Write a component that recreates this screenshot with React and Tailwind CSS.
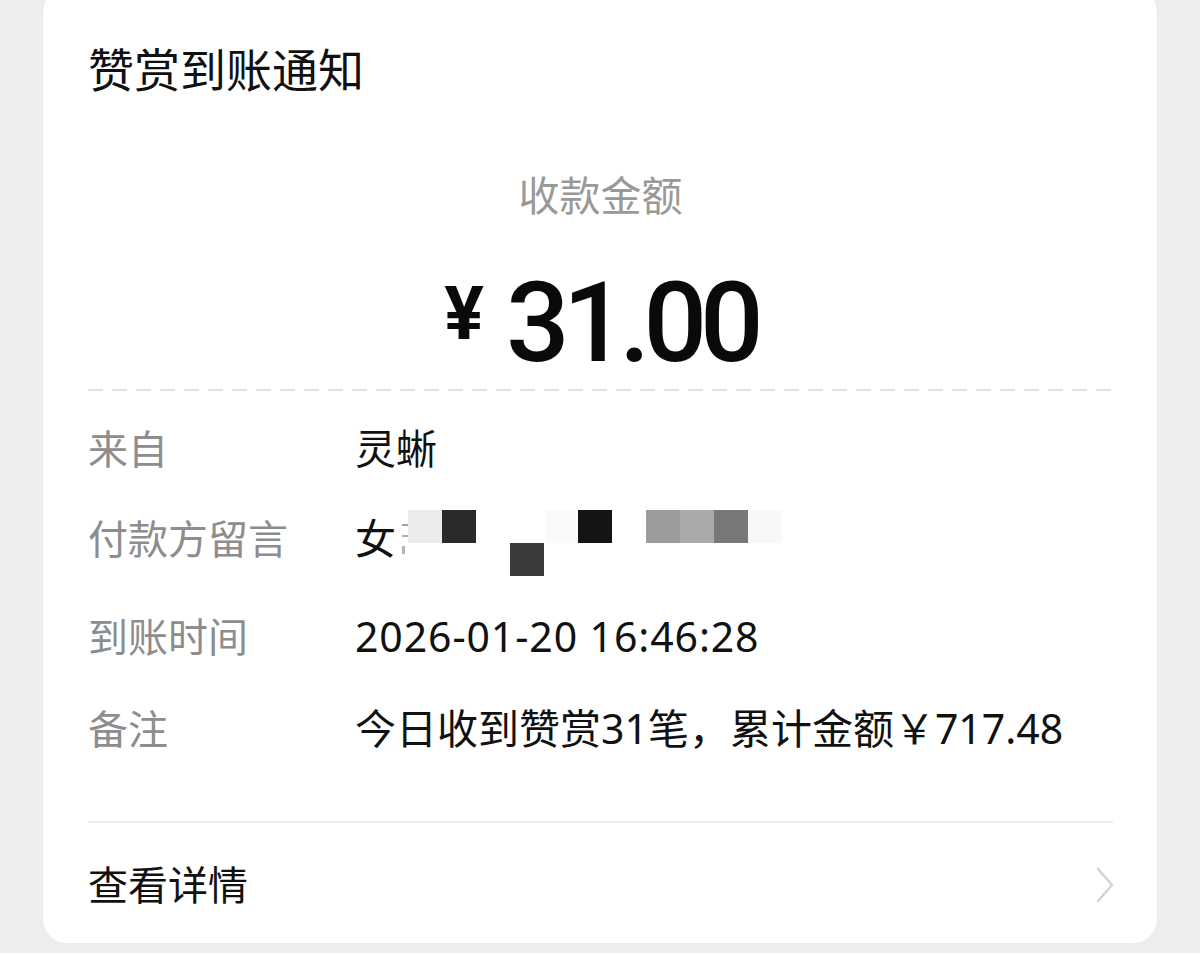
import React from 'react';

const rows = [
  { label: '来自', value: '灵蜥', mt: 'mt-[27px]' },
  { label: '付款方留言', value: 'masked', mt: 'mt-[38px]' },
  { label: '到账时间', value: '2026-01-20 16:46:28', mt: 'mt-[46px]', extra: 'tracking-[0.9px]' },
  { label: '备注', value: '今日收到赞赏31笔，累计金额￥717.48', mt: 'mt-[40px]' },
];

const mosaic = [
  { left: 53, top: -4, color: '#ececec' },
  { left: 87, top: -4, color: '#2a2a2a' },
  { left: 190, top: -4, color: '#fafafa' },
  { left: 223, top: -4, color: '#141414' },
  { left: 291, top: -4, color: '#9c9c9c' },
  { left: 325, top: -4, color: '#aaaaaa' },
  { left: 359, top: -4, color: '#787878' },
  { left: 393, top: -4, color: '#f8f8f8' },
  { left: 155, top: 29, color: '#3b3b3b' },
];

const MaskedMessage = () => (
  <div className="relative flex items-center h-full">
    <span>女</span>
    {/* blurred remnant of the next character */}
    <span className="ml-[6px] flex flex-col gap-[9px] blur-[0.6px]">
      <span className="w-[10px] h-[2px] bg-[#a0a0a0]" />
      <span className="w-[8px] h-[2px] bg-[#b0b0b0]" />
      <span className="w-[3px] h-[8px] bg-[#b5b5b5]" />
    </span>
    {mosaic.map((b, i) => (
      <span
        key={i}
        className="absolute w-[34px] h-[33px] blur-[0.6px]"
        style={{ left: b.left, top: b.top + 6, backgroundColor: b.color }}
      />
    ))}
  </div>
);

export default function App() {
  return (
    <div
      className="min-h-screen bg-[#ededed] px-[43px] pb-[11px] overflow-hidden"
      style={{ fontFamily: '"Noto Sans", "Noto Sans CJK SC", sans-serif' }}
    >
      <div className="-mt-[12px] bg-white rounded-[24px] pl-[45px] pr-[44px] pt-[51px] pb-[32px]">
        <div className="h-[60px] flex items-center text-[46px] text-[#111]">赞赏到账通知</div>

        <div className="mt-[71px] h-[52px] flex items-center justify-center text-[41px] text-[#999]">
          收款金额
        </div>

        <div
          className="mt-[41px] h-[120px] flex items-center justify-center gap-[22px] text-[#0a0a0a]"
          style={{ fontFamily: 'Roboto, "Noto Sans", sans-serif' }}
        >
          <span className="text-[74px] font-bold leading-none mb-[18px]">¥</span>
          <span className="text-[112px] font-medium leading-none tracking-[-7px]">31.00</span>
        </div>

        <div className="mt-[6px] h-[2px] bg-[linear-gradient(to_right,#e2e2e2_15px,transparent_15px)] bg-[length:24px_2px]" />

        {rows.map((r) => (
          <div key={r.label} className={`${r.mt} h-[52px] grid grid-cols-[267px_1fr] text-[40px]`}>
            <div className="flex items-center text-[#8d8d8d]">{r.label}</div>
            <div className={`flex items-center text-[#111] text-[41px] whitespace-nowrap ${r.extra || ''}`}>
              {r.value === 'masked' ? <MaskedMessage /> : r.value}
            </div>
          </div>
        ))}

        <div className="mt-[71px] h-[2px] bg-[#ececec]" />

        <div className="mt-[36px] h-[52px] flex items-center justify-between">
          <span className="text-[40px] text-[#111]">查看详情</span>
          <svg width="20" height="36" viewBox="0 0 20 36" className="mr-[-2px]">
            <path d="M3 2 L17 18 L3 34" fill="none" stroke="#d2d2d2" strokeWidth="2.4" strokeLinecap="round" strokeLinejoin="round" />
          </svg>
        </div>
      </div>
    </div>
  );
}
